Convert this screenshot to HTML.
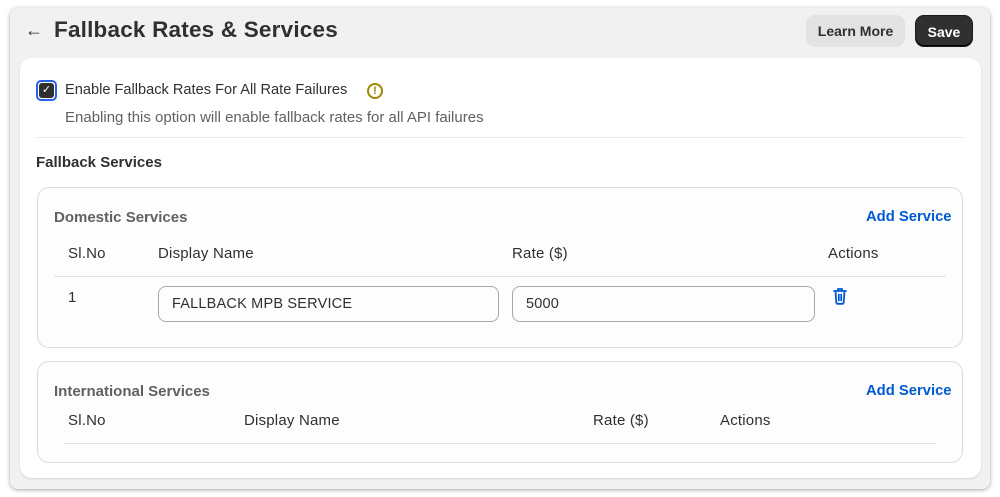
<!DOCTYPE html>
<html><head><style>
*{box-sizing:border-box;margin:0;padding:0}
body{width:1000px;height:497px;background:#fff;font-family:"Liberation Sans",sans-serif;color:#303030;position:relative;overflow:hidden}
.frame{position:absolute;left:10px;top:8px;width:980px;height:481px;background:#f1f1f1;border-radius:8px;box-shadow:0 1px 4px rgba(0,0,0,.35)}
.abs{position:absolute}
.card{position:absolute;left:10px;top:50px;width:961px;height:420px;background:#fff;border-radius:12px;box-shadow:0 1px 2px rgba(0,0,0,.12)}
.sub{position:absolute;left:17px;width:926px;background:#fdfdfd;border:1px solid #dcdcdc;border-radius:12px}
.btn{position:absolute;top:7px;height:32px;border-radius:9px;font-weight:bold;font-size:14px;line-height:32px;text-align:center}
.inp{position:absolute;height:36px;border:1px solid #a8a8a8;border-radius:8px;background:#fdfdfd;font-size:14.5px;line-height:34px;padding-left:13px;color:#303030;letter-spacing:.2px}
.t14{font-size:15px;letter-spacing:.2px}
.hd{font-size:15px;font-weight:bold;color:#616161}
.link{color:#005bd3;font-weight:bold;font-size:14.8px}
</style></head><body>
<div class="frame">
  <div class="abs" style="left:15px;top:12px;font-size:18px;color:#303030">&#8592;</div>
  <div class="abs" style="left:44px;top:9px;font-size:22.5px;font-weight:bold;color:#303030;letter-spacing:.2px">Fallback Rates &amp; Services</div>
  <div class="btn" style="left:796px;width:99px;background:#e3e3e3;color:#303030">Learn More</div>
  <div class="btn" style="left:905px;width:58px;background:#303030;color:#fff;border:1px solid #1a1a1a;box-shadow:inset 0 -1px 0 #000">Save</div>
  <div class="card">
    <div class="abs" style="left:16px;top:22px;width:21px;height:21px;border:2px solid #2563eb;border-radius:5px;padding:1px"><div style="width:15px;height:15px;background:#303030;border-radius:3px;color:#fff;font-size:11px;line-height:15px;text-align:center">&#10003;</div></div>
    <div class="abs" style="left:45px;top:24px;font-size:14.6px">Enable Fallback Rates For All Rate Failures</div>
    <div class="abs" style="left:347px;top:25px;width:16px;height:16px;border:2px solid #9c8a00;border-radius:50%;color:#9c8a00;font-size:11px;font-weight:bold;line-height:12px;text-align:center">!</div>
    <div class="abs" style="left:45px;top:51px;color:#616161;font-size:15px">Enabling this option will enable fallback rates for all API failures</div>
    <div class="abs" style="left:16px;top:79px;width:928px;height:1px;background:#ebebeb"></div>
    <div class="abs" style="left:16px;top:96px;font-size:15px;font-weight:bold">Fallback Services</div>
    <div class="sub" style="top:129px;height:161px">
      <div class="abs hd" style="left:16px;top:21px">Domestic Services</div>
      <div class="abs link" style="left:828px;top:21px">Add Service</div>
      <div class="abs t14" style="left:30px;top:57px">Sl.No</div>
      <div class="abs t14" style="left:120px;top:57px">Display Name</div>
      <div class="abs t14" style="left:474px;top:57px">Rate ($)</div>
      <div class="abs t14" style="left:790px;top:57px">Actions</div>
      <div class="abs" style="left:16px;top:88px;width:892px;height:1px;background:#e3e3e3"></div>
      <div class="abs t14" style="left:30px;top:101px">1</div>
      <div class="inp" style="left:120px;top:98px;width:341px">FALLBACK MPB SERVICE</div>
      <div class="inp" style="left:474px;top:98px;width:303px">5000</div>
      <svg class="abs" style="left:795px;top:99px" width="14" height="18" viewBox="0 0 14 18" fill="none" stroke="#005bd3" stroke-width="1.8" stroke-linecap="round"><path d="M1 4h12M5 4V2h4v2M2.5 4l.8 11.5a1.5 1.5 0 0 0 1.5 1.3h4.4a1.5 1.5 0 0 0 1.5-1.3L11.5 4M5.8 7.5v6M8.2 7.5v6"/></svg>
    </div>
    <div class="sub" style="top:303px;height:102px">
      <div class="abs hd" style="left:16px;top:21px">International Services</div>
      <div class="abs link" style="left:828px;top:21px">Add Service</div>
      <div class="abs t14" style="left:30px;top:50px">Sl.No</div>
      <div class="abs t14" style="left:206px;top:50px">Display Name</div>
      <div class="abs t14" style="left:555px;top:50px">Rate ($)</div>
      <div class="abs t14" style="left:682px;top:50px">Actions</div>
      <div class="abs" style="left:26px;top:81px;width:872px;height:1px;background:#e3e3e3"></div>
    </div>
  </div>
</div>
</body></html>
